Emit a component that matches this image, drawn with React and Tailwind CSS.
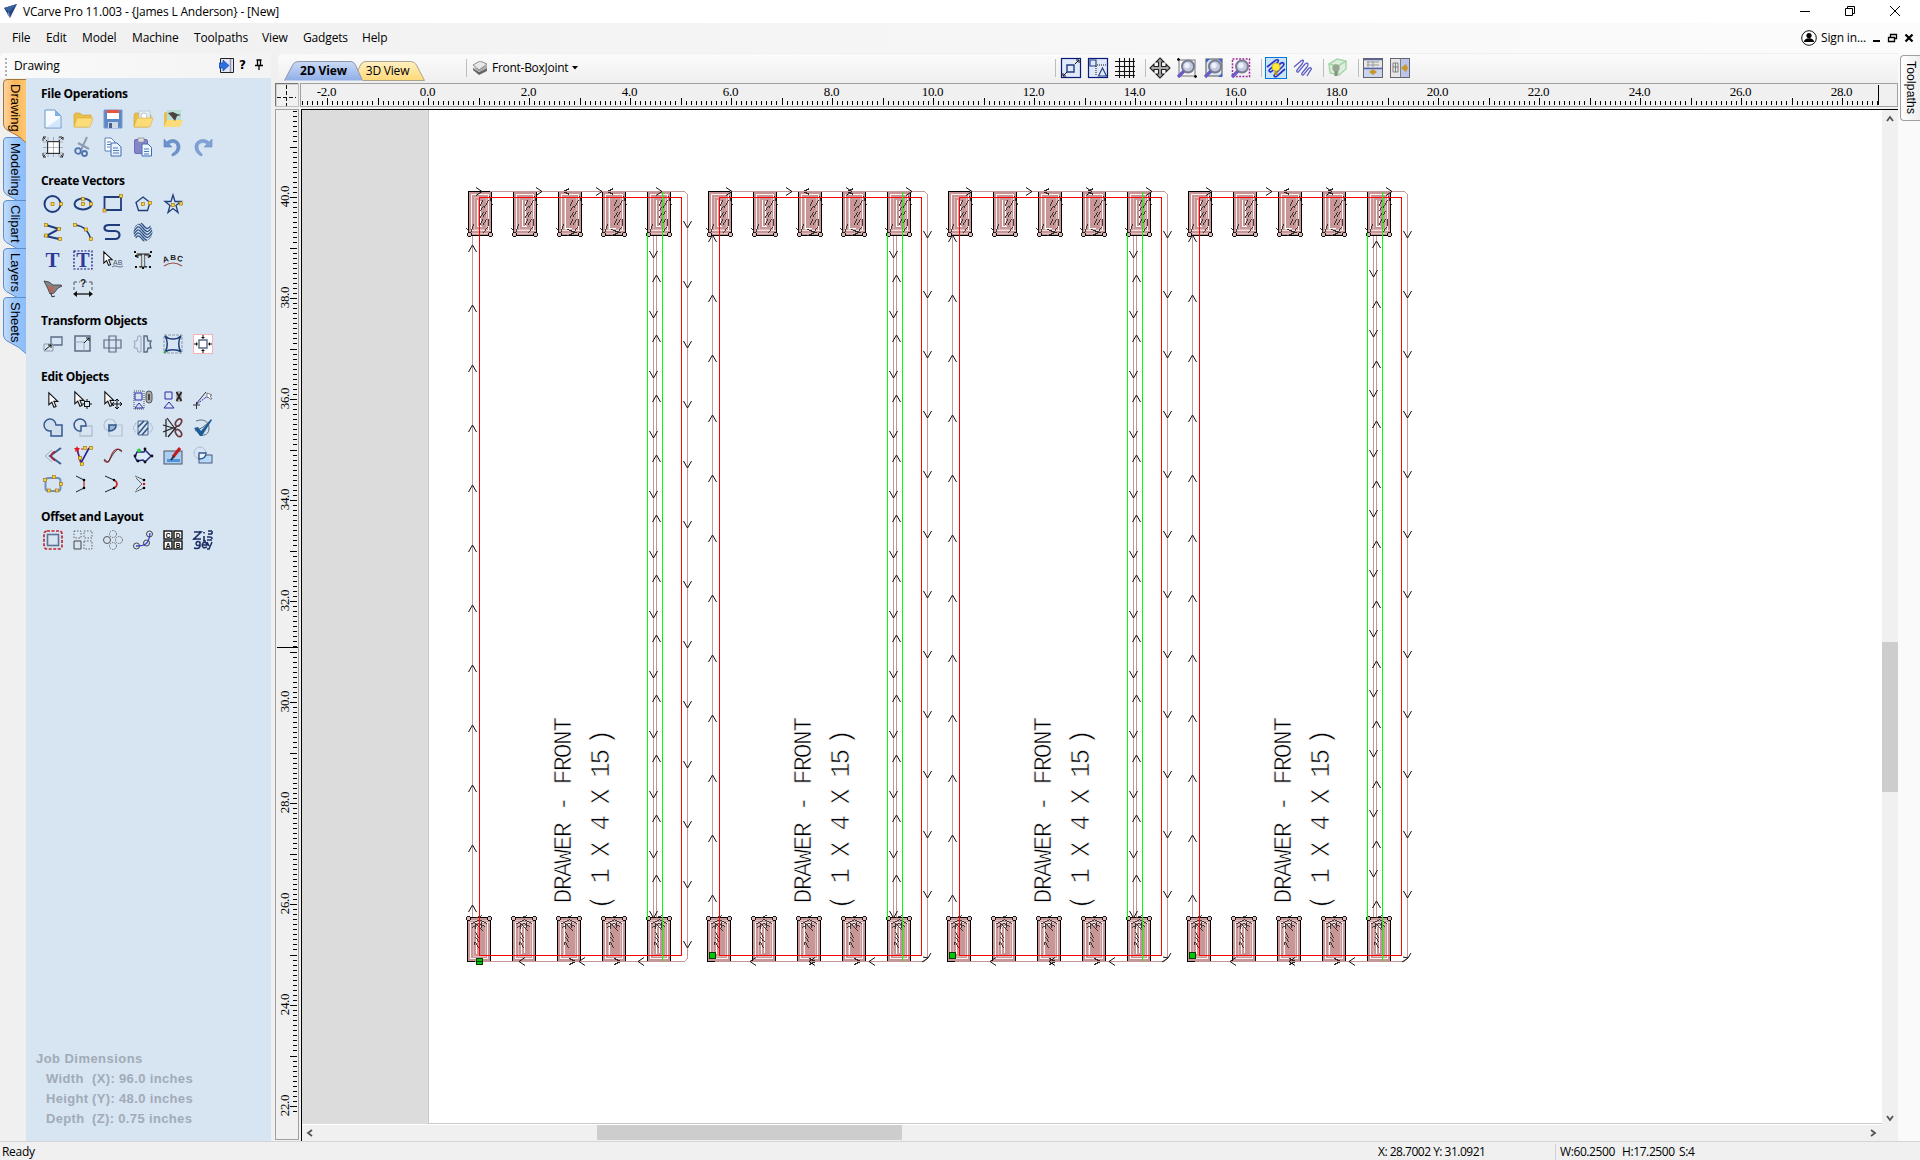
import React from "react";

const N = "#1f3d7a";
const G = "#5a6b85";

const Pts = ({ p }) =>
  p.map(([x, y], i) => (
    <rect key={i} x={x - 1.5} y={y - 1.5} width="3" height="3" fill="#f5d442" stroke="#a87a10" strokeWidth="0.7" />
  ));
const L = ({ d, c = N, w = 1.5, f = "none", ...r }) => <path d={d} stroke={c} strokeWidth={w} fill={f} {...r} />;
const Cursor = ({ x = 0 }) => (
  <path d={`M${x + 1} 1v14l3.5-3 2.5 6 2.500-1-2.500-6h4.500z`} fill="#fff" stroke="#111" strokeWidth="1.300" />
);
const Folder = ({ children }) => (
  <>
    <path d="M1 6l1-2h5l2 2h9v3l-3 9H1z" fill="#e9bf4b" stroke="#d09f30" strokeWidth="0.6" />
    {children}
    <path d="M4 9h16l-3 9H1z" fill="#fbdc78" stroke="#dcae40" strokeWidth="0.6" />
  </>
);
const Glass = () => (
  <>
    <circle cx="11" cy="8.500" r="6" fill="#c3cae0" stroke="#777c90" strokeWidth="2" />
    <circle cx="10" cy="7.500" r="2.700" fill="#eef1fb" />
    <path d="M7 13l-6 6" stroke="#6a5bc4" strokeWidth="3.200" />
  </>
);

const icons = {
  newFile: (
    <>
      <path d="M2 1h10l6 6v12H2z" fill="#f7fbff" stroke="#6799d2" />
      <path d="M12 1v6h6z" fill="#7fb0e4" />
      <path d="M4 18L17 9v9z" fill="#d2e7fa" />
    </>
  ),
  open: <Folder />,
  save: (
    <>
      <path d="M1 1h18v18H1z" fill="#5d88c4" stroke="#7a9bd0" />
      <rect x="4" y="1" width="12" height="9" fill="#fff" />
      <rect x="4" y="1" width="12" height="3" fill="#e8553f" />
      <rect x="5" y="13" width="10" height="6" fill="#cdd8e6" />
      <rect x="6" y="14" width="3" height="5" fill="#47618e" />
    </>
  ),
  openRef: (
    <Folder>
      <rect x="6" y="2" width="11" height="9" fill="#e4eef5" stroke="#b4c4cf" strokeWidth="0.7" />
      <circle cx="11" cy="7" r="3" fill="#fff" stroke="#9fb3c0" strokeWidth="0.7" />
    </Folder>
  ),
  openBird: (
    <>
      <path d="M1 5l1-2h5l2 2h9v3l-3 10H1z" fill="#e9bf4b" />
      <rect x="4" y="1" width="14" height="10" fill="#b9ddd4" />
      <path d="M4 11h16l-3 7H1z" fill="#fbdc78" />
      <path d="M5 4l5-1 4 2 4 1-4 1-2 5-4-5z" fill="#4b4241" />
    </>
  ),
  job: (
    <>
      <rect x="5" y="5" width="11" height="11" fill="#fff" />
      <L d="M5 0v20M10.500 0v20M16 0v20M0 5h20M0 10.500h20M0 16h20" c="#8f979f" w="0.7" />
      <L d="M4.500 4.500h12v12h-12z" c="#333" w="1" />
      <L d="M0 4V0h4M0 0l4 4M16 0h4v4M20 0l-4 4M0 16v4h4M0 20l4-4M20 16v4h-4M20 20l-4-4" c="#222" w="1" strokeDasharray="3 1" />
    </>
  ),
  cut: (
    <>
      <L d="M14 0L8 13M5 6l11 6" c="#8c9bb0" w="2" />
      <circle cx="5" cy="14" r="2.800" fill="none" stroke="#4e73ae" strokeWidth="1.800" />
      <circle cx="11.500" cy="16.500" r="2.500" fill="none" stroke="#4e73ae" strokeWidth="1.800" />
    </>
  ),
  copy: (
    <>
      <path d="M2 1h6l4 4v9H2z" fill="#fff" stroke="#5580bd" />
      <path d="M8 6h6l4 4v9H8z" fill="#eaf3fd" stroke="#3f6db0" />
      <L d="M4 5h4M4 7.500h4M4 10h3M10 11h5M10 13.500h6M10 16h6" c="#4b7bc0" w="1" />
    </>
  ),
  paste: (
    <>
      <rect x="1.500" y="2.500" width="13" height="14" rx="1.500" fill="#8685c9" stroke="#6a6bb0" />
      <rect x="5" y="1" width="6" height="4" fill="#d9dde8" stroke="#888" strokeWidth="0.7" />
      <path d="M9 7h6l3.500 3.500V19H9z" fill="#eef6ff" stroke="#3f6db0" />
      <L d="M11 12h5M11 14.500h5M11 17h5" c="#4b7bc0" w="1" />
    </>
  ),
  undo: (
    <path d="M1 2v8h8L6 7c4-3 8-1 8 3 0 3-2 5-5 7v2c5-1 8-5 8-9 0-7-8-10-13-5z" fill="#6d93cf" stroke="#5c80ba" strokeWidth="0.6" />
  ),
  redo: (
    <path d="M19 2v8h-8l3-3c-4-3-9-1-9 3 0 3 2 5 4 7v2c-4-1-7-5-7-9C2 3 11 0 16 5z" fill="#7fa3d8" stroke="#6a8fc8" strokeWidth="0.6" />
  ),
  circle: (
    <>
      <circle cx="9.500" cy="10" r="8" fill="none" stroke={N} strokeWidth="2" />
      <Pts p={[[9.5, 10], [18, 10]]} />
    </>
  ),
  ellipse: (
    <>
      <ellipse cx="10" cy="10" rx="8.500" ry="5.500" fill="none" stroke={N} strokeWidth="2" />
      <Pts p={[[10, 5], [10, 10], [18, 10]]} />
    </>
  ),
  rect: (
    <>
      <L d="M1.500 3h16.500v13H1.500z" w="1.800" />
      <Pts p={[[18, 2], [1.5, 16.5]]} />
    </>
  ),
  polygon: (
    <>
      <L d="M10 3l7 5.500-2.500 8h-9L3 8.500z" w="1.300" />
      <Pts p={[[10, 10], [17, 9]]} />
    </>
  ),
  star: (
    <>
      <L d="M10 1l2 6.500h6l-5 4 2 7L10 14.500l-5 4 2-7-5-4h6z" w="1.300" />
      <Pts p={[[10, 11], [18, 9.5]]} />
    </>
  ),
  polyline: (
    <>
      <L d="M3 3l13 4L3 14l13 3" w="2" />
      <Pts p={[[3, 3], [16, 7], [3, 13.5], [17, 17]]} />
    </>
  ),
  arc: (
    <>
      <L d="M2 3c10 1 14 7 16 15" w="1.500" />
      <Pts p={[[2, 3], [13, 7.5], [18, 17]]} />
    </>
  ),
  sCurve: <L d="M17 3H6C0 3 0 9 6 9h6c6 0 6 8 0 8H2" w="2.200" />,
  texture: (
    <>
      <clipPath id="disc"><circle cx="10" cy="10" r="9.500" /></clipPath>
      <g clipPath="url(#disc)">
        <L d="M-1 9c6-9 6-9 11-3s5 4 11-3M-1 12c6-9 6-9 11-3s5 4 11-3M-1 15c6-9 6-9 11-3s5 4 11-3M-1 18c6-9 6-9 11-3s5 4 11-3M-1 21c6-9 6-9 11-3s5 4 11-3M-1 6c6-9 6-9 11-3s5 4 11-3" c="#2e5384" w="1.300" />
      </g>
    </>
  ),
  text: <text x="9.500" y="17" textAnchor="middle" fontFamily="Liberation Serif, serif" fontWeight="bold" fontSize="21" fill="#2b3a9c">T</text>,
  textBox: (
    <>
      <L d="M1 1h18v18H1z" c="#14147a" w="1.200" strokeDasharray="2 1.500" />
      <text x="10" y="17" textAnchor="middle" fontFamily="Liberation Serif, serif" fontWeight="bold" fontSize="20" fill="#2b3a9c">T</text>
    </>
  ),
  textSelect: (
    <>
      <g transform="translate(0 1) scale(.8)"><Cursor /></g>
      <text x="10" y="15" fontFamily="Liberation Sans, sans-serif" fontSize="7" fill="#44556c">AB</text>
      <L d="M9 17c4-3 7 2 11-1" c="#5a6c84" w="1" />
    </>
  ),
  textFit: (
    <>
      <text x="10" y="16.500" textAnchor="middle" fontFamily="Liberation Serif, serif" fontWeight="bold" fontSize="19" fill="#e6edf5" stroke="#333" strokeWidth="0.8">T</text>
      {[[2, 2], [18, 2], [3, 17], [17, 17], [10, 18], [3, 6], [17, 6]].map(([x, y]) => (
        <rect key={`${x}-${y}`} x={x - 1} y={y - 1} width="2" height="2" fill="#111" />
      ))}
    </>
  ),
  textArc: (
    <>
      <g fontFamily="Liberation Sans, sans-serif" fontWeight="bold" fontSize="8" fill="#222">
        <text x="0" y="12" transform="rotate(-15 3 10)">A</text>
        <text x="7.200" y="9.500">B</text>
        <text x="14" y="11" transform="rotate(15 16 9)">C</text>
      </g>
      <L d="M1 16c6-4 12-4 18 0" c="#9a5252" w="1.200" />
    </>
  ),
  bird: (
    <>
      <path d="M1 3l5 1 4 3 8 0 1 1-4 2-4 5-4 1-2-5z" fill="#858585" stroke="#333" strokeWidth="0.8" />
      <path d="M5 8l6 1-1 5-3 1z" fill="#b6645c" />
      <L d="M8 15l1 4M9 19l3-1" c="#333" w="1" />
    </>
  ),
  dimension: (
    <>
      <L d="M1 4v9M19 4v9M1 4h18" c="#555" w="1" strokeDasharray="3 2" />
      <rect x="7" y="1" width="6" height="8" fill="#d7e4f2" />
      <text x="10" y="9" textAnchor="middle" fontFamily="Liberation Sans, sans-serif" fontWeight="bold" fontSize="10" fill="#222">?</text>
      <L d="M2 16h16" c="#111" w="1.300" />
      <path d="M0 16l4-3v6zM20 16l-4-3v6z" fill="#111" />
    </>
  ),
  move: (
    <>
      <L d="M8 3h11v8H8z" c={G} w="1.300" />
      <L d="M1 10h9v7H1z" c="#8f9aab" w="1" />
      <L d="M2 16l6-5M8 11H5M8 11v3" c="#111" w="1" />
    </>
  ),
  size: (
    <>
      <L d="M2 2h15v15H2z" c={G} w="1.500" />
      <L d="M2 8h9v9" c="#9ba7b8" w="1" />
      <L d="M11 9l5-5M16 4h-3M16 4v3" c="#111" w="1" />
    </>
  ),
  mirrorAlign: (
    <>
      <L d="M6 2h7v16H6z" c={G} w="1.200" />
      <L d="M1 6h17v8H1z" c={G} w="1.200" />
    </>
  ),
  mirror: (
    <>
      <L d="M8 2v16H5l-1-4H1l1-4-1-3h3l1-5z" c="#9aa6b6" w="1" />
      <L d="M11 2v16h3l1-4h3l-1-4 1-3h-3l-1-5z" c={G} w="1.400" />
    </>
  ),
  distort: (
    <>
      <L d="M1 1h18v18H1z" c="#7c8795" w="0.8" strokeDasharray="3 1" />
      <L d="M2 2c4 4 12 4 16 0-3 4-3 12 0 16-4-3-12-3-16 0 3-4 3-12 0-16z" w="1.500" />
      <circle cx="2" cy="18" r="1.300" fill="#2faf3a" />
    </>
  ),
  align: (
    <>
      <rect x="0.500" y="0.500" width="19" height="19" fill="#fff" stroke="#f4b4b4" />
      <L d="M6 6h8v8H6z" c={G} w="1.400" />
      <path d="M10 5l-2-2h1.500V1h1v2H12zM10 15l-2 2h1.500v2h1v-2H12zM5 10L3 8v1.500H1v1h2V12zM15 10l2-2v1.500h2v1h-2V12z" fill="#111" />
    </>
  ),
  select: <g transform="translate(5 2) scale(.85)"><Cursor /></g>,
  nodeEdit: (
    <>
      <g transform="translate(1 1) scale(.85)"><Cursor /></g>
      <L d="M14 9v10M9 14h10" c="#111" w="1" />
      <rect x="11.500" y="11.500" width="5" height="5" fill="#d7e4f2" stroke="#111" />
    </>
  ),
  moveSel: (
    <>
      <g transform="translate(1 1) scale(.85)"><Cursor /></g>
      <L d="M14 9v10M9 14h10M12 11l2-2 2 2M12 17l2 2 2-2M11 12l-2 2 2 2M17 12l2 2-2 2" c="#111" w="1" />
    </>
  ),
  group: (
    <>
      <L d="M1 1h10v18H1z" c="#222" w="0.8" strokeDasharray="1 1" />
      <L d="M2 3h7v7H2zM6 13l4 5H2z" c="#2a2aa8" w="1" />
      <rect x="13" y="1" width="6" height="12" rx="3" fill="#a9a9a9" stroke="#555" />
      <L d="M16 4v6" c="#222" w="1.400" />
    </>
  ),
  ungroup: (
    <>
      <L d="M2 2h7v7H2zM6 12l5 6H1z" c="#2a2aa8" w="1" />
      <rect x="13" y="1" width="6" height="11" rx="2" fill="#b4b4b4" />
      <L d="M13.500 2l5 9M18.500 2l-5 9" c="#222" w="1.600" />
    </>
  ),
  measure: (
    <>
      <L d="M3 14L13 2M0 15h7M3.500 12v7" c="#333" w="1" />
      <L d="M4 14L16 5" c="#2a2ad0" w="1" strokeDasharray="2 1" />
      <path d="M14 3l5 2-2 1 2 3-2 0-2-2-1 1z" fill="#fff" stroke="#666" strokeWidth="0.8" />
    </>
  ),
  weld: <L d="M8 13A6 6 0 1 1 13 7h6v11H8z" c="#34598e" w="1.500" f="#d0deed" />,
  subtract: (
    <>
      <L d="M9 8h10v10H7v-5" c="#b1bdd0" w="1.300" />
      <L d="M13 8H8v5A6 6 0 1 1 13 8z" c="#34598e" w="1.500" />
    </>
  ),
  intersect: (
    <>
      <circle cx="7" cy="7" r="6" fill="none" stroke="#b4c1d4" strokeWidth="1.200" />
      <L d="M6 7h13v11H6z" c="#b4c1d4" w="1.200" />
      <L d="M6 7h7c0 3-2 6-7 6z" c="#34598e" w="1.600" f="#9db6d6" />
    </>
  ),
  slice: (
    <>
      <L d="M5 3h10v14H5z" c="#52688a" w="1" />
      <L d="M5 9l6-6M5 16L15 4M9 17l6-7" c="#345487" w="1.600" />
      <L d="M3 5l-3 5 3 5M17 5l3 5-3 5" c="#9aaabf" w="1" strokeDasharray="2 1" />
    </>
  ),
  scissors: (
    <>
      <L d="M0 7l10 3L0 14M4 0l9 12M5 19l9-11M3 1v18" c="#222" w="1.200" />
      <ellipse cx="15.500" cy="4.500" rx="2.500" ry="4" transform="rotate(35 15.500 4.500)" fill="#d7e4f2" stroke="#6b3b45" strokeWidth="1.700" />
      <ellipse cx="15.500" cy="15" rx="2.500" ry="4" transform="rotate(-35 15.500 15)" fill="#d7e4f2" stroke="#6b3b45" strokeWidth="1.700" />
    </>
  ),
  validate: (
    <>
      <L d="M3 3c8-3 13 1 13 7s-4 8-9 7M2 13C8 11 12 8 17 3" c="#5f6b78" w="1" />
      <path d="M1 10l4-1 3 4L18 1l1 1L9 18H7z" fill="#1d5c98" />
    </>
  ),
  offsetV: (
    <>
      <L d="M18 2L7 10l11 8" c="#3b5f94" w="2" />
      <L d="M9 4L2 10l7 6" c="#9daec4" w="1" />
      <path d="M12 5.500C7 8 7 12 12 14.500" fill="none" stroke="#b71c2c" strokeWidth="1.500" />
    </>
  ),
  vNodes: (
    <>
      <L d="M4 3l4 14L16 2" c="#22229c" w="1.600" />
      <L d="M4 3h9M4 3l3 13" c="#e02020" w="1" strokeDasharray="2 2" />
      <Pts p={[[12, 2], [18, 2], [7, 12], [9, 18]]} />
      <path d="M4 0l1 2h2L5.500 4 6 6 4 5 2 6l.5-2L1 2h2z" fill="#e01818" />
    </>
  ),
  fitCurve: (
    <>
      <L d="M1 14c5 6 6-2 8-6s5-7 10-3" c="#a03030" w="1.300" />
      <L d="M1 13l4 3 6-9 4-4 4 3" c="#333" w="0.8" />
    </>
  ),
  extend: (
    <>
      <L d="M2 11l2-5h7l1-2 6 6-6 6-2-2-6 1z" c="#24247c" w="1.500" f="#dcebf9" />
      <circle cx="6" cy="4.500" r="2" fill="#2bd13a" />
      {[[2, 10], [19, 10], [12, 3], [12, 16], [5, 15]].map(([x, y]) => (
        <circle key={`${x}${y}`} cx={x} cy={y} r="1.400" fill="#111" />
      ))}
    </>
  ),
  trace: (
    <>
      <rect x="1" y="5" width="18" height="13" fill="#a9cff4" stroke="#555" />
      <rect x="4" y="13" width="13" height="3" fill="#4f92dc" />
      <L d="M10 11l7-9" c="#c11c1c" w="3" />
      <L d="M8 14l3-4" c="#333" w="2" />
    </>
  ),
  crop: (
    <>
      <circle cx="7" cy="7" r="6" fill="none" stroke="#aebfd4" />
      <rect x="6" y="9" width="13" height="8" fill="#b6d8fa" stroke="#4a5b75" />
      <L d="M6 7h7c0 3-2 6-7 6z" c="#34598e" w="1.300" f="#eaf4ff" />
    </>
  ),
  fitBox: (
    <>
      <rect x="2.500" y="4" width="15" height="13" rx="3" fill="none" stroke="#7390b8" strokeWidth="2" />
      <Pts p={[[11, 3], [2, 6], [18, 10], [6, 16.5], [14, 16.5]]} />
    </>
  ),
  fillet1: (
    <>
      <L d="M3 2l8 4M3 18l8-4" c="#222" w="1" />
      <L d="M11 6v8" c="#c02020" w="1.200" />
      <circle cx="11" cy="6" r="1.300" /><circle cx="11" cy="14" r="1.300" />
    </>
  ),
  fillet2: (
    <>
      <L d="M2 2l9 4M2 18l9-4" c="#222" w="1" />
      <L d="M11 6c4 2 4 6 0 8" c="#c02020" w="1.500" />
      <circle cx="11" cy="6" r="1.200" /><circle cx="11" cy="14" r="1.200" />
    </>
  ),
  fillet3: (
    <>
      <L d="M2 2l9 4M2 18l9-4M3 4l6 6-6 6" c="#555" w="0.900" />
      <circle cx="11" cy="6" r="1.300" /><circle cx="11" cy="14" r="1.300" />
      <circle cx="11" cy="10" r="1.300" fill="#c02020" />
    </>
  ),
  offset: (
    <>
      <rect x="1" y="1" width="18" height="18" rx="3" fill="none" stroke="#c1272d" strokeWidth="1.700" strokeDasharray="3 1.500" />
      <rect x="4.500" y="4.500" width="11" height="11" fill="none" stroke="#5c7394" strokeWidth="1.600" />
    </>
  ),
  array: (
    <>
      <L d="M1 1h7v7H1zM11 1h8v7h-8zM11 11h8v8h-8z" c="#444" w="0.800" strokeDasharray="1.500 1.500" />
      <L d="M1 11h7v8H1z" c="#444" w="1" />
    </>
  ),
  circArray: (
    <>
      <g fill="none" stroke="#666" strokeDasharray="1.500 1">
        <circle cx="10" cy="4" r="3.500" /><circle cx="16" cy="10" r="3.500" /><circle cx="10" cy="16" r="3.500" />
      </g>
      <circle cx="4" cy="10" r="3.500" fill="none" stroke="#555" />
    </>
  ),
  pathCopy: (
    <>
      <L d="M3 16c8 0 13-1 14-13" c="#3a3ad8" w="1.300" />
      <g fill="none" stroke="#444"><circle cx="3.500" cy="16" r="3" /><circle cx="13.500" cy="13" r="3" /><circle cx="16.500" cy="4" r="3" /></g>
    </>
  ),
  plates: (
    <>
      {[["C", 1, 1], ["D", 11, 1], ["A", 1, 11], ["B", 11, 11]].map(([t, x, y]) => (
        <g key={t}>
          <rect x={x} y={y} width="8" height="8" fill="#fff" stroke="#111" strokeWidth="1.400" />
          <text x={x + 4} y={y + 6.5} textAnchor="middle" fontFamily="Liberation Sans, sans-serif" fontWeight="bold" fontSize="6.500">{t}</text>
        </g>
      ))}
    </>
  ),
  nest: (
    <>
      <L d="M1 2h7L1 9h7M7 1v2M1 8v2M11 6v5M10 11h3M11 2v1.500M15 1h4M15 4h4M19 1v3M14 7h3q2 0 2 2M14 10h5" c="#1c2f63" w="1.600" />
      <L d="M5 11.500a2 2 0 1 0 .1 0M7 11.500v5q-1 3-6 1.500M9 15h5q-1-4-4-2-2 3 1 5l3-1M14 12l2 4M19 12l-3 7-2 0" c="#1c2f63" w="1.500" />
    </>
  ),
  snapA: (
    <>
      <rect x="0.500" y="0.500" width="19" height="19" fill="#e0e9f8" stroke="#0a1a78" strokeWidth="1.200" />
      <L d="M6 7h7v7H6z" c={N} w="1.400" />
      <L d="M2 18l4-4M14 6l4-4M15 2h3v3M2 15v3h3" c="#111" w="1" />
    </>
  ),
  snapB: (
    <>
      <rect x="0.500" y="0.500" width="19" height="19" fill="#e0e9f8" stroke="#0a1a78" strokeWidth="1.200" />
      <L d="M2 2h6v6H2zM14.500 10l4 8h-8z" c={N} w="1.100" />
      <L d="M8 8v10M9 7h9" c="#111" w="1" strokeDasharray="1 1" />
    </>
  ),
  grid: <L d="M4.500 0v20M9.500 0v20M14.500 0v20M18.500 0v20M0 3.500h20M0 8.500h20M0 13.500h20M0 17.500h20" c="#111" w="1.100" />,
  pan: <path d="M10 0l4 4h-2.500v4.500H16V6l4 4-4 4v-2.500h-4.500V16H14l-4 4-4-4h2.500v-4.500H4V14l-4-4 4-4v2.500h4.500V4H6z" fill="#aaa" stroke="#222" strokeWidth="1.100" />,
  zoomA: (
    <>
      <rect x="2" y="2" width="16" height="16" fill="none" stroke="#999" strokeWidth="1.400" />
      <Glass />
      <L d="M0 1.500h3M1.500 0v3M17 18.500h3M18.500 17v3" c="#111" w="1.300" />
    </>
  ),
  zoomB: (
    <>
      <rect x="2" y="1" width="16" height="17" fill="#dce5f4" stroke="#777" strokeWidth="1.300" />
      <Glass />
      <path d="M2 1h4L2 5zM18 1h-4l4 4zM18 19v-4l-4 4z" fill="#3b62c4" />
    </>
  ),
  zoomC: (
    <>
      <rect x="1.500" y="1" width="17" height="17.500" fill="none" stroke="#a22ca0" strokeWidth="1.500" strokeDasharray="2 1.300" />
      <Glass />
    </>
  ),
  pathsOn: (
    <>
      <L d="M1 9l9-7c3-1 3 1 1 3l-7 6c-2 2 0 4 2 2L15 5c2-1 4 1 2 3L9 16c-2 2 0 4 2 2l8-7" c="#2a36c8" w="1.700" />
      <circle cx="10" cy="9" r="4" fill="#ffe93b" stroke="#c8a91d" strokeWidth="0.7" />
      <rect x="8.500" y="13" width="3" height="4" fill="#b59329" />
    </>
  ),
  pathsOff: <L d="M1 9l7-6c3-2 3 0 1 3l-5 6c-1 2 1 3 2 1l6-7c3-2 4 0 2 3l-5 6c-1 2 1 3 2 1l5-6c3-1 3 1 1 3l-3 5" c="#5a5dc4" w="1.300" />,
  bulb: (
    <>
      <path d="M1 6l8-5 9 2v8l-7 6-9-2z" fill="#deeede" stroke="#a5d5a9" strokeWidth="1.500" />
      <L d="M1 6l9 2 8-5M10 8v9" c="#a5d5a9" />
      <circle cx="8" cy="10" r="3.700" fill="#96a693" />
      <rect x="6.500" y="13" width="3" height="5" fill="#83927f" />
    </>
  ),
  splitH: (
    <>
      <rect x="0.500" y="0.500" width="19" height="19" fill="#ccd5ef" stroke="#65656d" />
      <rect x="1" y="2" width="18" height="7" fill="#e6e6e6" />
      <L d="M1 1.500h18M1 10.500h18" c="#5a62a0" w="1.400" />
      <L d="M4 4h12M4 7h12M10 3v6M5 3v6" c="#999" w="1" />
      <path d="M10 11l4 3-4 3-4-3z" fill="#c9952f" />
    </>
  ),
  splitV: (
    <>
      <rect x="0.500" y="0.500" width="19" height="19" fill="#b9c5ea" stroke="#65656d" />
      <rect x="1" y="1" width="9" height="18" fill="#e6e6e6" />
      <L d="M10.500 1v18M3 5h5v9H3zM3 9h5M5.500 5v9" c="#777" w="0.900" />
      <path d="M11 10l5-4 2 4-2 4z" fill="#c9952f" />
    </>
  ),
};

const Icon = ({ n }) => (
  <svg viewBox="0 0 20 20" className="h-5 w-5 shrink-0 overflow-visible">{icons[n]}</svg>
);

const sections = [
  ["File Operations", [["newFile", "open", "save", "openRef", "openBird"], ["job", "cut", "copy", "paste", "undo", "redo"]]],
  ["Create Vectors", [["circle", "ellipse", "rect", "polygon", "star"], ["polyline", "arc", "sCurve", "texture"], ["text", "textBox", "textSelect", "textFit", "textArc"], ["bird", "dimension"]]],
  ["Transform Objects", [["move", "size", "mirrorAlign", "mirror", "distort", "align"]]],
  ["Edit Objects", [["select", "nodeEdit", "moveSel", "group", "ungroup", "measure"], ["weld", "subtract", "intersect", "slice", "scissors", "validate"], ["offsetV", "vNodes", "fitCurve", "extend", "trace", "crop"], ["fitBox", "fillet1", "fillet2", "fillet3"]]],
  ["Offset and Layout", [["offset", "array", "circArray", "pathCopy", "plates", "nest"]]],
];

const menus = [["File", "w-[34px]"], ["Edit", "w-[36px]"], ["Model", "w-[50px]"], ["Machine", "w-[62px]"], ["Toolpaths", "w-[68px]"], ["View", "w-[41px]"], ["Gadgets", "w-[59px]"], ["Help", "w-[50px]"]];

function TitleBar() {
  return (
    <header className="flex h-[23px] items-center bg-white pl-1 text-[12px]">
      <svg viewBox="0 0 14 16" className="h-4 w-3.5">
        <path d="M0 4L13 0 6 14z" fill="#24467e" /><path d="M0 4l13-4-8 8z" fill="#3a629c" /><path d="M5 8l1 6-3-4z" fill="#7690b5" />
      </svg>
      <span className="ml-[5px] tracking-[-0.18px]">VCarve Pro 11.003 - {"{James L Anderson}"} - [New]</span>
      <div className="ml-auto flex items-center gap-[35px] pr-5 pb-0.5">
        <svg viewBox="0 0 10 10" className="h-2.5 w-2.5"><path d="M0 5.500h10" stroke="#000" /></svg>
        <svg viewBox="0 0 10 10" className="h-2.5 w-2.5"><path d="M.5 2.500h7v7h-7zM2.500 2.500v-2h7v7h-2" fill="none" stroke="#000" /></svg>
        <svg viewBox="0 0 10 10" className="h-2.5 w-2.5"><path d="M0 0l10 10M10 0L0 10" stroke="#000" /></svg>
      </div>
    </header>
  );
}

function MenuBar() {
  return (
    <nav className="flex h-[30px] items-center bg-gradient-to-r from-[#f0f0f0] to-[#fcfcfc] pl-3 text-[12px] tracking-[-0.15px]">
      {menus.map(([m, w]) => <span key={m} className={`${w} whitespace-nowrap`}>{m}</span>)}
      <div className="ml-auto flex items-center pr-1.5">
        <svg viewBox="0 0 16 16" className="h-4 w-4">
          <circle cx="8" cy="8" r="7.300" fill="#fff" stroke="#111" />
          <circle cx="8" cy="5.500" r="2.600" /><path d="M3 12c0-5 10-5 10 0z" />
        </svg>
        <span className="ml-1 w-[52px] whitespace-nowrap">Sign in...</span>
        <svg viewBox="0 0 41 10" className="h-2.5 w-[41px]">
          <path d="M0 8h7" stroke="#000" strokeWidth="2" />
          <path d="M15.500 4.500h6v4h-6zM17.500 4V1.500h6v4H22M15 4.500h7M17 1.500h7" fill="none" stroke="#000" strokeWidth="1.300" />
          <path d="M32.500 1.500l7 7M39.500 1.500l-7 7" stroke="#000" strokeWidth="2.200" />
        </svg>
      </div>
    </nav>
  );
}

const sideTabs = [["Drawing", "h-[65px]", 65, "pt-[5px]"], ["Modeling", "h-[72px] -mt-[7px]", 72, "pt-[6px]"], ["Clipart", "h-[57px] -mt-[9px]", 57, "pt-[5px]"], ["Layers", "h-[58px] -mt-[9px]", 58, "pt-[5px]"], ["Sheets", "h-[58px] -mt-[9px]", 58, "pt-[5px]"]];

function SideTabs() {
  return (
    <div className="flex w-[26px] shrink-0 flex-col bg-[#f0f0f0] pt-px pl-[3px]">
      {sideTabs.map(([t, cls, h, pad], i) => (
        <div key={t} className={`relative ${cls} ${i === 0 ? "z-10" : ""}`}>
          <svg className="absolute inset-0 h-full w-[23px]" viewBox={`0 0 23 ${h}`}>
            <defs>
              <linearGradient id={`tab${i}`}>
                <stop offset="0" stopColor={i ? "#c4defc" : "#fcd6a4"} />
                <stop offset="0.500" stopColor={i ? "#98c4fa" : "#fbb458"} />
                <stop offset="1" stopColor={i ? "#8dbcf8" : "#ffc973"} />
              </linearGradient>
            </defs>
            <path d={`M23.500 .5H4Q.5 .5 .5 4V${h - 20}Q1 ${h - 15} 6 ${h - 13}Q17 ${h - 8} 23.500 ${h - 1}`} fill={`url(#tab${i})`} stroke={i ? "#5d8ecb" : "#a5763b"} />
          </svg>
          <span className={`relative block ${pad} pl-[3px] text-[13px] leading-[18px] font-['Liberation_Sans',sans-serif] [writing-mode:vertical-rl]`}>{t}</span>
        </div>
      ))}
    </div>
  );
}

function LeftPanel() {
  return (
    <aside className="flex w-[271px] shrink-0 flex-col">
      <div className="flex h-[25px] items-center rounded-tl bg-gradient-to-r from-[#fafafa] to-[#f3f3f3] pb-px pl-[5px] text-[12px]">
        <svg viewBox="0 0 2 18" className="mt-1 h-[18px] w-0.5"><path d="M1 0v18" stroke="#b0b0b0" strokeWidth="2" strokeDasharray="2 2" /></svg>
        <span className="mt-0.5 ml-[7px] tracking-[-0.1px]">Drawing</span>
        <div className="ml-auto flex items-center pr-1.5">
          <svg viewBox="0 0 15 15" className="h-[15px] w-[15px]">
            <path d="M1.500.5h13v14h-13z" fill="#e4e8f5" stroke="#222" /><path d="M11.500 1v13" stroke="#8b93b8" strokeWidth="1.500" />
            <path d="M0 5h4V2l6 5.500L4 13v-3H0z" fill="#2f6fe0" stroke="#174aa8" strokeWidth="0.7" />
          </svg>
          <span className="ml-[5px] w-[14px] font-['DejaVu_Sans',sans-serif] text-[12px] leading-4 font-bold">?</span>
          <svg viewBox="0 0 10 12" className="ml-px mr-px h-3 w-2.5"><path d="M2.500 1h5M3.500 1v5M6.500 1v5M1 6.500h8M5 6.500V11" stroke="#000" strokeWidth="1.300" fill="none" /></svg>
        </div>
      </div>
      <div className="flex flex-1">
        <SideTabs />
        <div className="flex flex-1 flex-col bg-[#d7e4f2] pt-[6px]">
          {sections.map(([title, rows], i) => (
            <section key={title} className="mb-[9px]">
              <h2 className={`pl-[15px] text-[12px] font-bold tracking-[-0.3px] leading-[19px] ${i === 0 ? "mb-[2px]" : ""} ${i === 1 ? "mt-px" : ""}`}>{title}</h2>
              {rows.map((r, j) => (
                <div key={j} className="flex h-7 items-center gap-2.5 pl-[17px]">
                  {r.map((n) => <Icon key={n} n={n} />)}
                </div>
              ))}
            </section>
          ))}
          <div className="mt-auto mb-[12px] pl-[10px] font-['Liberation_Sans',sans-serif] text-[13px] leading-5 font-bold tracking-[0.35px] text-[#a1abb7]">
            <p className="tracking-[0.45px]">Job Dimensions</p>
            <div className="grid grid-cols-[46px_auto] pl-[10px] whitespace-nowrap">
              <span>Width</span><span>(X): 96.0 inches</span>
              <span>Height</span><span>(Y): 48.0 inches</span>
              <span>Depth</span><span>(Z): 0.75 inches</span>
            </div>
          </div>
        </div>
      </div>
    </aside>
  );
}

const Sep = ({ className = "" }) => <i className={`h-[18px] w-px bg-[#bdbdbd] ${className}`} />;

function ViewBar() {
  return (
    <div className="flex h-[29px] items-center rounded-tl bg-gradient-to-b from-[#fbfbfb] to-[#efefef]">
      <div className="flex h-full items-end pb-[2px] pl-[6px] text-[12px]">
        <div className="relative z-10 flex h-5 w-[79px] items-center justify-center pb-px font-bold tracking-[-0.1px]">
          <svg viewBox="0 0 79 20" className="absolute inset-0 h-5 w-[79px]">
            <defs><linearGradient id="v2" x2="0" y2="1"><stop stopColor="#ccdaf6" /><stop offset="1" stopColor="#8faee8" /></linearGradient></defs>
            <path d="M.5 19.500L8 5Q10 .5 14 .5H67Q70 .5 72 5L78.500 19.500" fill="url(#v2)" stroke="#8e98ac" />
          </svg>
          <span className="relative">2D View</span>
        </div>
        <div className="relative -ml-[6px] flex h-5 w-[68px] items-center justify-center pr-[7px] pb-px tracking-[-0.2px]">
          <svg viewBox="0 0 68 20" className="absolute inset-0 h-5 w-[68px]">
            <defs><linearGradient id="v3" x2="0" y2="1"><stop stopColor="#fff0c2" /><stop offset="1" stopColor="#ffd977" /></linearGradient></defs>
            <path d="M1 9L4 3Q6 .5 9 .5H53Q58 .5 60 5L67.500 19.500H6" fill="url(#v3)" stroke="#aaa38f" />
          </svg>
          <span className="relative">3D View</span>
        </div>
      </div>
      <div className="flex flex-1 items-center pb-0.5">
        <Sep className="ml-[41px]" />
        <svg viewBox="0 0 14 14" className="ml-[6px] h-3.5 w-3.5">
          <path d="M0 9l6 5 8-4V7L6 11 0 7z" fill="#666" /><path d="M0 6l6 5 8-4V4L6 8z" fill="#aaa" /><path d="M0 4l7-4 7 3-8 6z" fill="#e7e7e7" stroke="#777" strokeWidth="0.8" />
        </svg>
        <span className="ml-[5px] text-[12px] tracking-[-0.28px]">Front-BoxJoint</span>
        <svg viewBox="0 0 6 4" className="ml-1 h-1 w-1.5"><path d="M0 0h6L3 3.500z" /></svg>
        <div className="mr-[488px] ml-auto flex items-center">
          <Sep /><div className="ml-[5px] flex gap-[7px]"><Icon n="snapA" /><Icon n="snapB" /><Icon n="grid" /></div>
          <Sep className="ml-[10px]" /><div className="ml-[4px] flex gap-[7px]"><Icon n="pan" /><Icon n="zoomA" /><Icon n="zoomB" /><Icon n="zoomC" /></div>
          <Sep className="ml-[10px]" />
          <div className="ml-[3px] flex h-[22px] w-[22px] items-center justify-center border border-[#0078d7] bg-[#cce4f7]"><Icon n="pathsOn" /></div>
          <div className="ml-[6px] flex"><Icon n="pathsOff" /></div>
          <Sep className="ml-[10px]" /><div className="ml-[4px] flex"><Icon n="bulb" /></div>
          <Sep className="ml-[10px]" /><div className="ml-[4px] flex gap-[7px]"><Icon n="splitH" /><Icon n="splitV" /></div>
        </div>
      </div>
    </div>
  );
}

const range = (a, b) => Array.from({ length: b - a + 1 }, (_, i) => a + i);

function TopRuler() {
  return (
    <svg viewBox="300 83 1598 25" className="h-[25px] w-[1598px]" shapeRendering="crispEdges">
      <rect x="300.500" y="83.500" width="1597" height="23" fill="#f0f0f0" stroke="#a0a0a0" />
      {range(-25, 287).map((t) => {
        const x = Math.round(428 + t * 5.05);
        return <rect key={t} x={x} y={t % 10 ? 101 : 98} width="1" height={t % 10 ? 4 : 7} />;
      })}
      {range(-1, 14).map((k) => (
        <text key={k} x={427.5 + k * 101} y="96" textAnchor="middle" fontFamily="Liberation Serif, serif" fontSize="13" letterSpacing="-0.300">{(k * 2).toFixed(1)}</text>
      ))}
      <rect x="1878" y="85" width="1" height="20" />
    </svg>
  );
}

function SideRuler() {
  return (
    <svg viewBox="275 109 26 1032" className="h-[1032px] w-[26px] shrink-0" shapeRendering="crispEdges">
      <rect x="275.500" y="109.500" width="23" height="1030" fill="#f0f0f0" stroke="#a0a0a0" />
      {range(219, 417).map((t) => {
        const y = Math.round(197 + (400 - t) * 5.05);
        return <rect key={t} x={t % 10 ? 293 : 290} y={y} height="1" width={t % 10 ? 4 : 7} />;
      })}
      {range(11, 20).map((k) => {
        const y = 196.500 + (20 - k) * 101;
        return <text key={k} x="289" y={y} transform={`rotate(-90 289 ${y})`} textAnchor="middle" fontFamily="Liberation Serif, serif" fontSize="13" letterSpacing="-0.300">{(k * 2).toFixed(1)}</text>;
      })}
      <rect x="277" y="647" width="21" height="1" />
    </svg>
  );
}

const up = (x, y) => `M${x - 4} ${y + 7}L${x} ${y}L${x + 4} ${y + 7}`;
const down = (x, y) => `M${x - 4} ${y - 7}L${x} ${y}L${x + 4} ${y - 7}`;
const right = (x, y) => `M${x - 6} ${y - 4}L${x} ${y}L${x - 6} ${y + 4}`;
const left = (x, y) => `M${x + 6} ${y - 4}L${x} ${y}L${x + 6} ${y + 4}`;

function Pocket({ x, y, flip, i }) {
  const wide = i === 2 || i === 3;
  return (
    <g transform={flip ? `translate(${x} ${y + 44}) scale(1 -1)` : `translate(${x} ${y})`}>
      <rect x="0" y="0" width="23" height="44" fill="#c89696" stroke="#000" />
      <rect x="3" y="3" width="17" height="36" fill="none" stroke="#fff" strokeWidth="0.900" />
      <rect x="5.500" y="5.500" width="12" height="32" fill="none" stroke="#e5caca" strokeWidth="0.700" />
      <path d={wide ? "M7 6v31M6.500 37h7" : "M9 8v27M12 9v26M9 35h4"} stroke="#fff" fill="none" />
      <path d="M1 39h21M2 41.500h19" stroke="#ecd6d6" strokeWidth="0.700" />
      <rect x="-1" y="41" width="4" height="4" rx="1.500" fill="#dcbcbc" stroke="#000" strokeWidth="0.900" />
      <rect x="20" y="41" width="4" height="4" rx="1.500" fill="#dcbcbc" stroke="#000" strokeWidth="0.900" />
      {flip ? (
        <path d="M3 38l8 4 8-4M4 34l6 4 7-3M8 33v6M14 34v6M8 44l6 2M11 24l-3 6M12 20l-4 5M11 14l-3 6M16 31l-6 6M7 17v3" stroke="#2b2b2b" fill="none" strokeWidth="0.900" />
      ) : (
        <path d="M14 8l-3 6M15 14l-4 5M15 20l-4 6M14 27l-3 6M20 8l-5 8M18 19l-4 6M18 27l-4 6M19 35l-5 6M20 27v7M21 4l3 9M-2 36l4 5 3-9" stroke="#2b2b2b" fill="none" strokeWidth="0.900" />
      )}
      {wide && <path d={flip ? "M12 -3l6 3-6 3" : "M11 -3l-6 3 6 3M9 38l8 3-8 3"} stroke="#2b2b2b" fill="none" />}
    </g>
  );
}

const Label = ({ x, text, y0, size, last = 0 }) => (
  <text
    transform={`translate(${x} ${y0}) rotate(-90) scale(.93 1)`}
    x={Array.from(text, (_, k) => (k * 14.2 - (k === text.length - 1 ? last : 0)).toFixed(1)).join(" ")}
    y="0"
    textAnchor="middle"
    fontFamily="Liberation Mono, monospace"
    fontSize={size}
    stroke="#fff"
    strokeWidth="0.700"
    style={{ whiteSpace: "pre" }}
    shapeRendering="auto"
  >
    {text}
  </text>
);

function Part({ n }) {
  const o = n * 240;
  const first = n === 0;
  const ls = first ? 245 : 235;
  const rs = first ? 228 : 238;
  const md = n === 3 ? 277 : 258;
  const mu = n === 3 ? 241 : 275;
  const tx = first ? 482 : 492;
  return (
    <g transform={`translate(${o} 0)`} fill="none">
      {[0, 1, 2, 3, 4].map((i) => (
        <React.Fragment key={i}>
          <Pocket i={i} x={Math.round(468 + i * 44.8) + 0.5} y={191.5} />
          <Pocket i={i} x={Math.round(467 + i * 45) + 0.5} y={917.5} flip />
        </React.Fragment>
      ))}
      <path d="M472.500 917V236M490 191.500H684.500L687.500 194.500V958.500L684.500 961.500H475" stroke="#c89696" />
      <path d="M653.500 236V917M656.500 236V917" stroke="#c89696" />
      <path d="M479.500 197.500H681.500V955.500H479.500Z" stroke="#f00" />
      <path d="M647.500 233V920M662.500 192V961" stroke="#0f0" />
      <g stroke="#111" shapeRendering="auto">
        <path d={range(0, 11).map((k) => up(472.5, ls + k * 60) + down(687.5, rs + k * 60)).join("")} />
        <path d={(first ? down(687.5, 948) : "M683 957l5 1 3-5M682 962l6-4")} />
        <path d={range(0, n === 3 ? 10 : 11).map((k) => down(653.5, md + k * 60)).join("")} />
        <path d={range(0, n === 3 ? 11 : 10).map((k) => up(656.5, mu + k * 60)).join("")} />
        <path d={range(0, 3).map((k) => right(tx + k * 60, 191.5)).join("")} />
        <path d={(first ? [519, 579, 638] : [510, 569, 629]).map((x) => left(x, 961.5)).join("")} />
      </g>
      <g fill="#000">
        <Label x={571} y0={896} size="26.500" text="DRAWER - FRONT" />
        <Label x={609} y0={902} size="28" last={7} text="( 1 X 4 X 15 )" />
      </g>
      <rect x={first ? 476.5 : 469.5} y={first ? 958.5 : 952.5} width="6" height="6" fill="#00c800" stroke="#053805" />
      {first && <path d="M476 961.500h7" stroke="#053805" />}
    </g>
  );
}

function Canvas() {
  return (
    <svg viewBox="302 110 1580 1015" className="h-[1015px] w-[1580px] bg-white" shapeRendering="crispEdges">
      <rect x="302" y="110" width="126" height="1014" fill="#dcdcdc" />
      <path d="M428.500 110V1124M428 1123.500H1882" stroke="#c8c8c8" />
      {[0, 1, 2, 3].map((n) => <Part key={n} n={n} />)}
    </svg>
  );
}

const Chevron = ({ d }) => (
  <svg viewBox="0 0 8 8" className="h-2 w-2 shrink-0"><path d={d} fill="none" stroke="#555" strokeWidth="1.800" /></svg>
);

export default function App() {
  return (
    <div className="flex h-[1160px] w-[1920px] flex-col overflow-hidden bg-[#f0f0f0] font-['Open_Sans','Noto_Sans',sans-serif] text-black">
      <TitleBar />
      <MenuBar />
      <main className="flex h-[1088px]">
        <LeftPanel />
        <div className="flex w-[1627px] flex-col pt-px">
          <div className="pl-[7px]"><ViewBar /></div>
          <div className="flex h-[26px] pl-1">
            <svg viewBox="0 0 25 25" className="h-[25px] w-[25px] shrink-0">
              <path d="M.5 23V.5H23" fill="none" stroke="#777" strokeWidth="1.500" /><path d="M23.500 0v23.500H0" fill="none" stroke="#c0c0c0" />
              <path d="M11.500 2v21M2 14.500h19" stroke="#111" strokeDasharray="4 2" />
            </svg>
            <TopRuler />
          </div>
          <div className="flex pl-1">
            <SideRuler />
            <div className="flex flex-1 flex-col border-t border-l border-black">
              <div className="flex">
                <Canvas />
                <div className="flex w-4 flex-col items-center bg-[#f0f0f0] pt-[5px] pb-[3px]">
                  <Chevron d="M1 6l3-4 3 4" />
                  <div className="mt-[519px] h-[150px] w-full bg-[#cdcdcd]" />
                  <div className="mt-auto"><Chevron d="M1 2l3 4 3-4" /></div>
                </div>
              </div>
              <div className="flex h-4 items-center bg-[#f0f0f0] pr-[21px] pb-px pl-1">
                <Chevron d="M6 1L2 4l4 3" />
                <div className="ml-[283px] h-[15px] w-[305px] bg-[#cdcdcd]" />
                <div className="ml-auto"><Chevron d="M2 1l4 3-4 3" /></div>
              </div>
            </div>
          </div>
        </div>
        <div className="flex w-[22px] justify-end bg-[#fafafa] pt-[2px]">
          <div className="flex h-[66px] w-5 items-center justify-center rounded-l border border-r-0 border-[#a0a0a0] bg-gradient-to-r from-white to-[#eee] font-['Liberation_Sans',sans-serif] text-[12px] tracking-[0.2px] [writing-mode:vertical-rl]">Toolpaths</div>
        </div>
      </main>
      <footer className="flex h-[19px] items-center border-t border-[#d5d5d5] pt-px pl-[2px] text-[12px] tracking-[-0.4px]">
        <span className="w-[1376px] tracking-[-0.3px]">Ready</span>
        <span className="w-[177px] tracking-[-0.5px]">X: 28.7002 Y: 31.0921</span>
        <i className="mr-[4px] h-4 w-px bg-[#d0d0d0]" />
        <span className="w-[62px]">W:60.2500</span>
        <span className="w-[57px]">H:17.2500</span>
        <span>S:4</span>
      </footer>
    </div>
  );
}
